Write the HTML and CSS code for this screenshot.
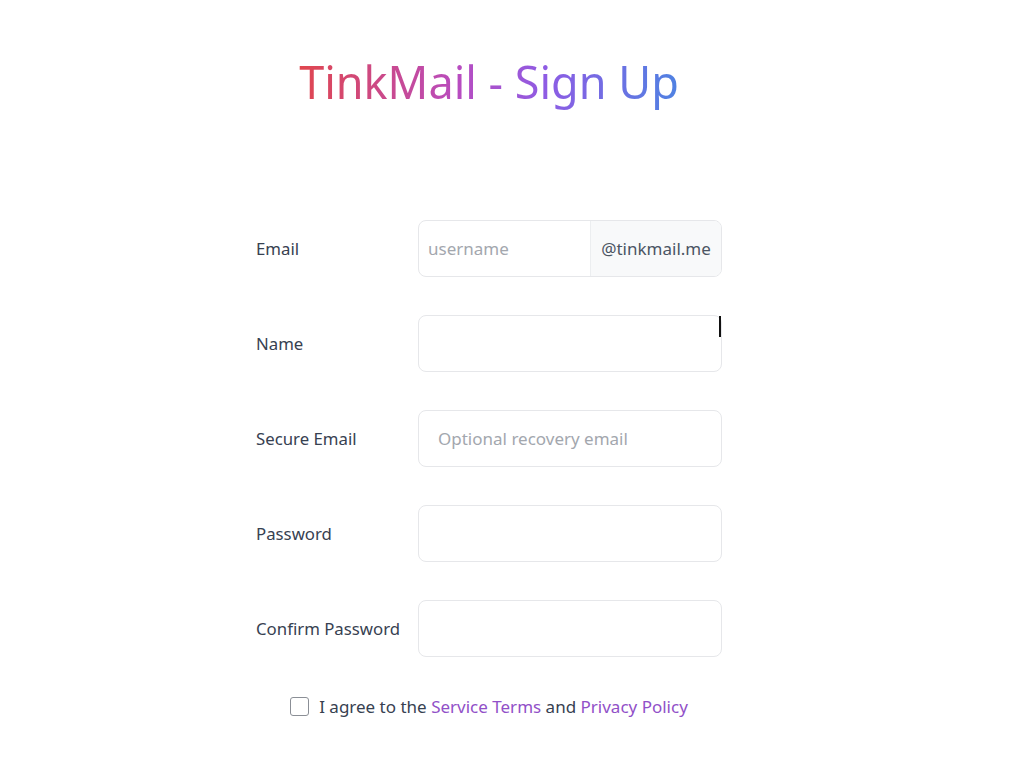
FILE: index.html
```html
<!DOCTYPE html>
<html lang="en">
<head>
<meta charset="utf-8">
<title>TinkMail - Sign Up</title>
<link rel="stylesheet" href="styles.css">
</head>
<body>
<div class="page">
  <main class="signup">
    <h1 class="title">TinkMail - Sign Up</h1>
    <form class="form">
      <div class="row">
        <label class="label">Email</label>
        <div class="group">
          <input class="field field-user" type="text" placeholder="username">
          <span class="addon">@tinkmail.me</span>
        </div>
      </div>
      <div class="row">
        <label class="label">Name</label>
        <div class="group cursor-host">
          <input class="field" type="text">
          <span class="ibeam"></span>
        </div>
      </div>
      <div class="row">
        <label class="label">Secure Email</label>
        <div class="group">
          <input class="field" type="text" placeholder="Optional recovery email">
        </div>
      </div>
      <div class="row">
        <label class="label">Password</label>
        <div class="group">
          <input class="field" type="password">
        </div>
      </div>
      <div class="row">
        <label class="label">Confirm Password</label>
        <div class="group">
          <input class="field" type="password">
        </div>
      </div>
      <div class="agree">
        <span class="box"></span>
        <span class="agree-text">I agree to the <a class="link" href="#">Service Terms</a> and <a class="link" href="#">Privacy Policy</a></span>
      </div>
    </form>
  </main>
</div>
</body>
</html>
```

FILE: styles.css
```css
html, body {
  margin: 0;
  padding: 0;
  background: #ffffff;
}
body {
  font-family: "Noto Sans", "Open Sans", sans-serif;
  color: #374151;
}
.page {
  width: 1024px;
  padding-right: 46px;
  box-sizing: border-box;
}
.signup {
  width: 466px;
  margin: 0 auto;
  display: flex;
  flex-direction: column;
  align-items: center;
}
.title {
  margin: 50px 0 0 0;
  height: 64px;
  font-size: 45px;
  font-weight: 400;
  line-height: 64px;
  background: linear-gradient(90deg, #e0464e 0%, #b84cc0 42%, #8e5ce4 65%, #4f82e2 100%);
  -webkit-background-clip: text;
  background-clip: text;
  color: transparent;
  white-space: nowrap;
}
.form {
  width: 466px;
  margin-top: 106px;
  display: flex;
  flex-direction: column;
  gap: 38px;
}
.row {
  display: flex;
  align-items: center;
  height: 57px;
}
.label {
  width: 162px;
  flex: none;
  font-size: 16.8px;
  color: #374151;
}
.group {
  flex: 1;
  display: flex;
  height: 57px;
  border: 1px solid #e6e7ea;
  border-radius: 8px;
  box-sizing: border-box;
  overflow: hidden;
  position: relative;
}
.field {
  flex: 1;
  min-width: 0;
  border: 0;
  outline: none;
  padding: 0 19px;
  font-family: inherit;
  font-size: 17px;
  color: #374151;
  background: transparent;
}
.field-user {
  padding-left: 9px;
}
.field::placeholder {
  color: #a3a7ae;
}
.addon {
  flex: none;
  width: 131px;
  box-sizing: border-box;
  border-left: 1px solid #eceef0;
  background: #f8f9fa;
  display: flex;
  align-items: center;
  justify-content: center;
  font-size: 17px;
  color: #4b5563;
}
.cursor-host {
  overflow: visible;
}
.ibeam {
  position: absolute;
  right: 0;
  top: 0;
  width: 2px;
  height: 21px;
  background: #111111;
}
.agree {
  margin-top: 0;
  display: flex;
  align-items: center;
  justify-content: center;
  gap: 10px;
}
.box {
  width: 19px;
  height: 19px;
  box-sizing: border-box;
  border: 1.5px solid #8b8f96;
  border-radius: 3px;
  background: #fff;
}
.agree-text {
  font-size: 17px;
  color: #374151;
}
.link {
  color: #9150c8;
  text-decoration: none;
}
```
